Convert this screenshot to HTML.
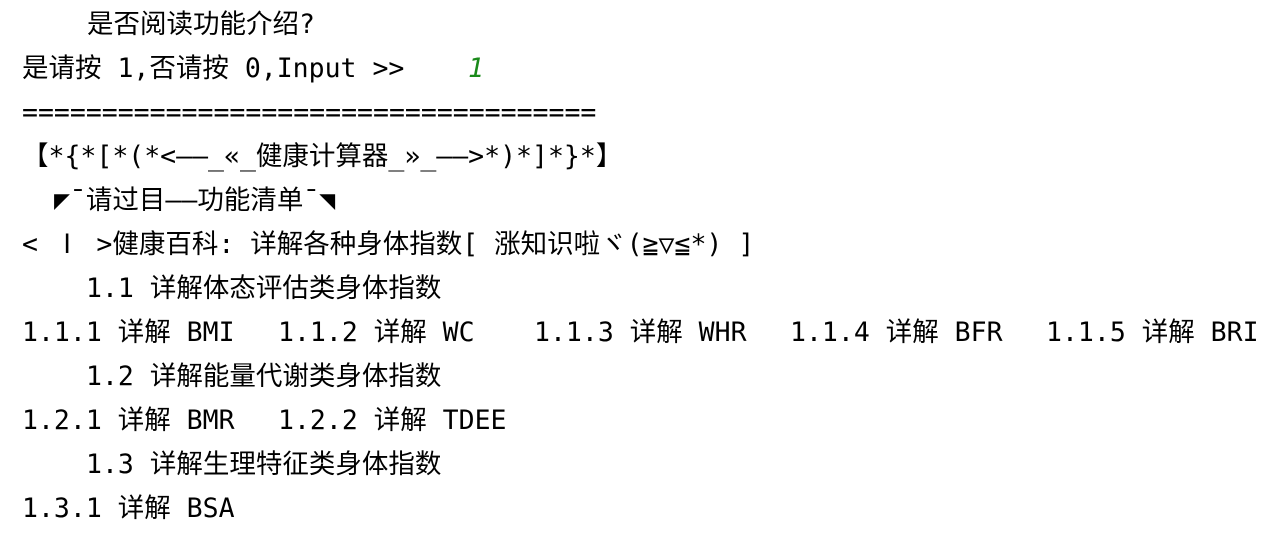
<!DOCTYPE html>
<html><head><meta charset="utf-8"><style>
html,body{margin:0;padding:0;background:#fff;width:1279px;height:534px;overflow:hidden}
.l{position:absolute;height:44px;line-height:44px;margin-top:3px;white-space:pre;font-family:"DejaVu Sans Mono","Noto Sans CJK SC",monospace;font-size:26.5px;color:#000}
.g{color:#1a8a1a;font-style:italic}
</style></head><body>
<div class="l" style="top:0;left:87px">是否阅读功能介绍?</div>
<div class="l" style="top:44px;left:22px">是请按 1,否请按 0,Input &gt;&gt;</div>
<div class="l g" style="top:44px;left:468px">1</div>
<div class="l" style="top:88px;left:22px">====================================</div>
<div class="l" style="top:132px;left:22px">【*{*[*(*&lt;——_«_健康计算器_»_——&gt;*)*]*}*】</div>
<div class="l" style="top:176px;left:54px">◤¯请过目——功能清单¯◥</div>
<div class="l" style="top:220px;left:22px">&lt; Ⅰ &gt;健康百科: 详解各种身体指数[ 涨知识啦ヾ(≧▽≦*) ]</div>
<div class="l" style="top:264px;left:86px">1.1 详解体态评估类身体指数</div>
<div class="l" style="top:308px;left:22px">1.1.1 详解 BMI</div>
<div class="l" style="top:308px;left:278px">1.1.2 详解 WC</div>
<div class="l" style="top:308px;left:534px">1.1.3 详解 WHR</div>
<div class="l" style="top:308px;left:790px">1.1.4 详解 BFR</div>
<div class="l" style="top:308px;left:1046px">1.1.5 详解 BRI</div>
<div class="l" style="top:352px;left:86px">1.2 详解能量代谢类身体指数</div>
<div class="l" style="top:396px;left:22px">1.2.1 详解 BMR</div>
<div class="l" style="top:396px;left:278px">1.2.2 详解 TDEE</div>
<div class="l" style="top:440px;left:86px">1.3 详解生理特征类身体指数</div>
<div class="l" style="top:484px;left:22px">1.3.1 详解 BSA</div>
</body></html>
